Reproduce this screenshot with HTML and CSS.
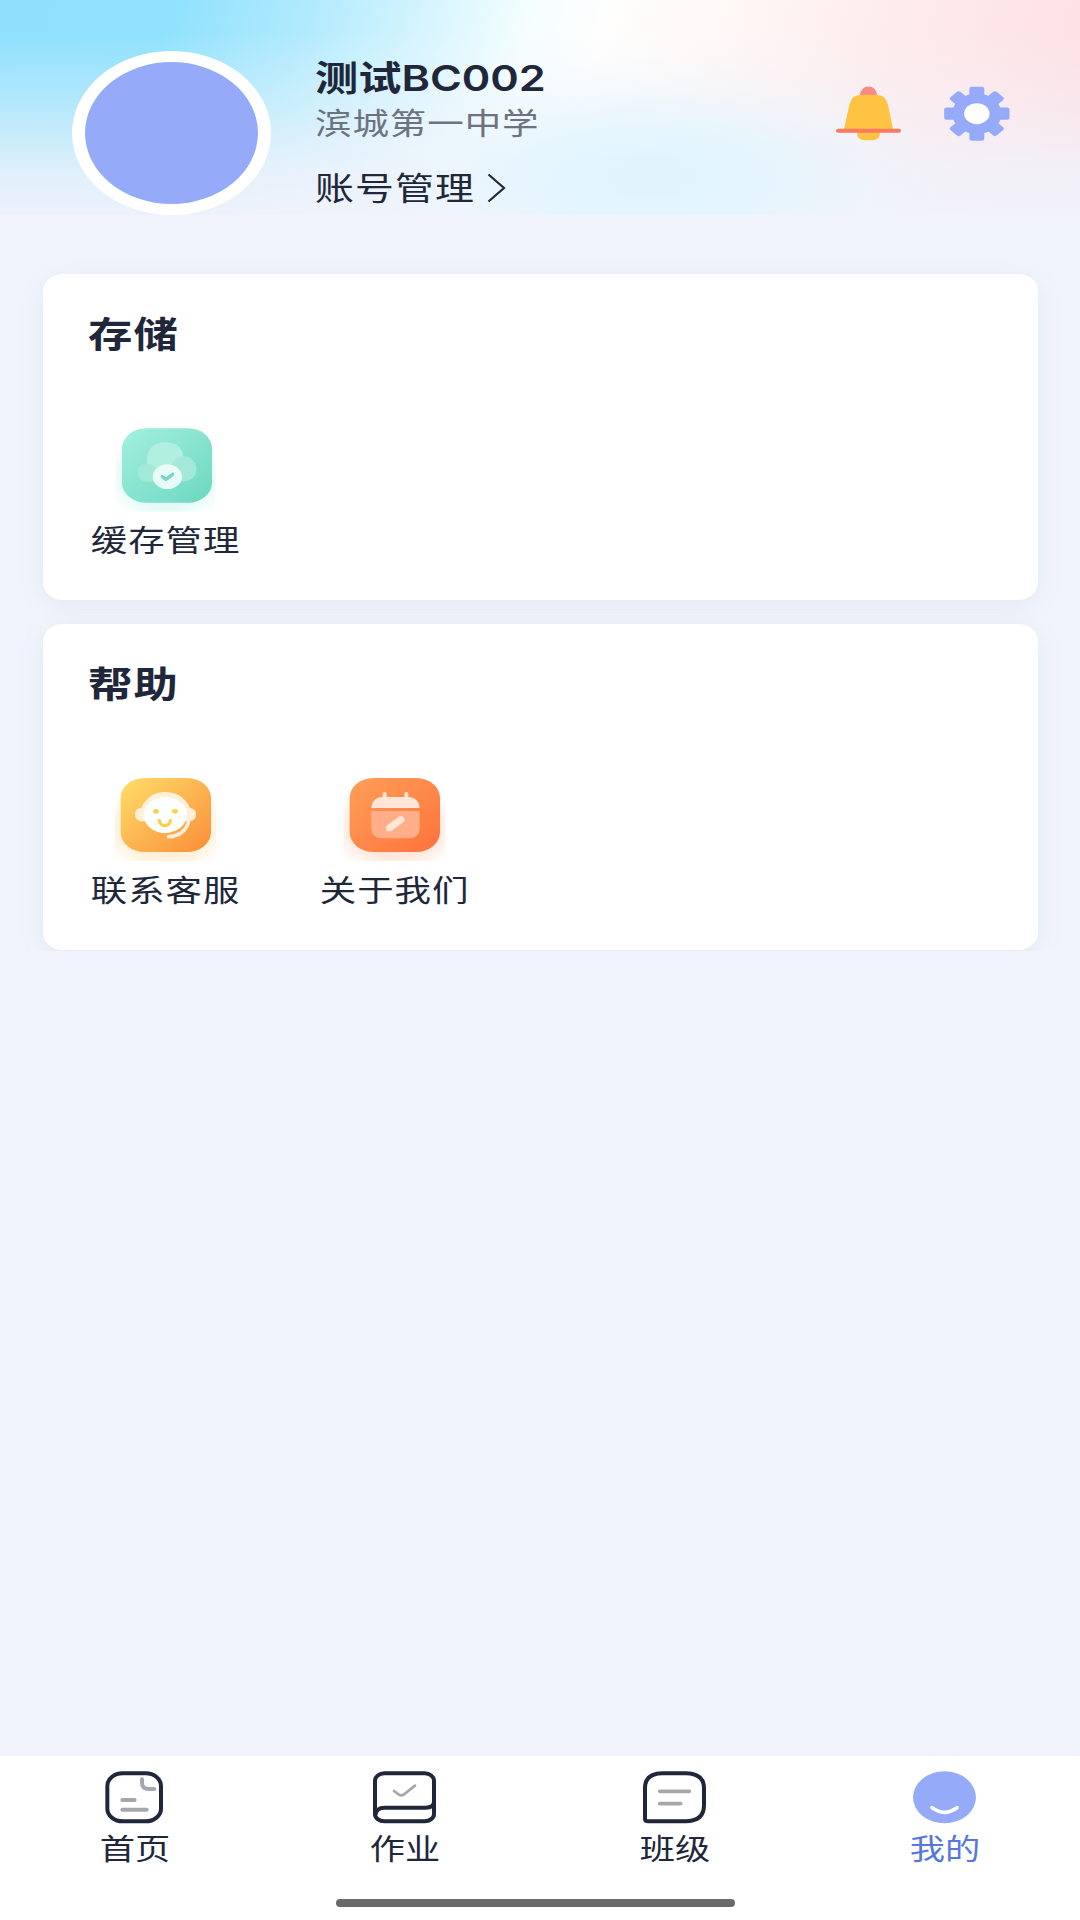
FILE: index.html
```html
<!DOCTYPE html>
<html lang="zh-CN">
<head>
<meta charset="utf-8">
<title>我的</title>
<link rel="stylesheet" href="styles.css">
</head>
<body>
<div class="screen">
  <header class="profile">
    <div class="avatar"></div>
    <div class="info">
      <div class="name"><span class="wide">测试<span class="latin">BC002</span></span></div>
      <div class="school"><span class="wide">滨城第一中学</span></div>
      <div class="account">
        <span class="account-text"><span class="wide">账号管理</span></span>
        <svg class="chevron" viewBox="0 0 19 30"><path d="M1.5 1.5L17 15L1.5 28.5"/></svg>
      </div>
    </div>
    <div class="actions">
      <svg width="66" height="56" viewBox="108 77 198 168">
        <path d="M180 106V104a25 25 0 0 1 51 0v2z" fill="#fb8986"/>
        <path d="M171 212h69v6q0 22-24 22h-21q-24 0-24-22z" fill="#ffc343"/>
        <path d="M131 211L148 133Q155 103 184 103H228Q257 103 264 133L280 211z" fill="#ffc343"/>
        <rect x="108" y="205" width="195" height="12" rx="6" fill="#f97b5f"/>
      </svg>
      <svg width="66" height="56" viewBox="431 77 198 168">
        <g transform="translate(529.5 160) scale(1.21 1)" fill="#95abf9">
          <circle r="61"/>
          <g><rect x="-18.5" y="-81" width="37" height="162" rx="6"/><rect x="-81" y="-18.5" width="162" height="37" rx="6"/></g>
          <g transform="rotate(45)"><rect x="-17.5" y="-81" width="35" height="162" rx="6"/><rect x="-81" y="-17.5" width="162" height="35" rx="6"/></g>
          <circle r="31.5" fill="#fff"/>
        </g>
      </svg>
    </div>
  </header>

  <main class="content">
    <section class="card">
      <h2 class="card-title"><span class="wide">存储</span></h2>
      <div class="entries">
        <a class="entry">
          <svg class="entry-icon" viewBox="240 495 336 264">
            <defs>
              <linearGradient id="mint" x1="0" y1="0" x2="1" y2="1"><stop offset="0" stop-color="#a3f0de"/><stop offset="1" stop-color="#6bd7c0"/></linearGradient>
              <radialGradient id="mintGlow"><stop offset=".6" stop-color="#e2fbf5"/><stop offset="1" stop-color="#e2fbf5" stop-opacity="0"/></radialGradient>
              <clipPath id="boxA"><rect x="257" y="560" width="300" height="195"/></clipPath>
            </defs>
            <ellipse cx="409" cy="655" rx="200" ry="135" fill="url(#mintGlow)" clip-path="url(#boxA)"/>
            <rect x="276" y="505" width="270" height="223" rx="72" ry="60" fill="url(#mint)"/>
            <path d="M352 611C330 611 323 624 323 638C323 653 334 665 354 665H452C484 665 499 650 499 628C499 604 482 588 459 588C457 562 436 547 406 547C371 547 347 570 352 611z" fill="#a2e9d9"/>
            <path d="M352 611C347 570 371 547 406 547C436 547 457 562 459 588C438 592 424 604 420 630L390 650C384 624 372 612 352 611z" fill="#b1efe1"/>
            <ellipse cx="412" cy="650" rx="44" ry="37" fill="#e9fbf6"/>
            <path d="M397 650L408 658L428 643" fill="none" stroke="#71d8c3" stroke-width="10" stroke-linecap="round" stroke-linejoin="round"/>
          </svg>
          <span class="entry-label"><span class="wide mid">缓存管理</span></span>
        </a>
      </div>
    </section>

    <section class="card">
      <h2 class="card-title"><span class="wide">帮助</span></h2>
      <div class="entries">
        <a class="entry">
          <svg class="entry-icon" viewBox="240 495 336 264">
            <defs>
              <linearGradient id="gold" x1="0" y1="0" x2="1" y2="1"><stop offset="0" stop-color="#ffde69"/><stop offset="1" stop-color="#fa8d38"/></linearGradient>
              <radialGradient id="goldGlow"><stop offset=".6" stop-color="#ffefd6"/><stop offset="1" stop-color="#ffefd6" stop-opacity="0"/></radialGradient>
              <clipPath id="boxB"><rect x="254" y="560" width="304" height="193"/></clipPath>
            </defs>
            <ellipse cx="407" cy="655" rx="205" ry="138" fill="url(#goldGlow)" clip-path="url(#boxB)"/>
            <rect x="272" y="504" width="271" height="222" rx="72" ry="60" fill="url(#gold)"/>
            <path d="M334 594C346 563 373 546 406 546C439 546 467 563 480 594C492 595 498 603 498 613C498 625 492 633 478 634H334C321 633 315 624 315 613C315 602 321 594 334 594z" fill="#fff0d8"/>
            <ellipse cx="406" cy="615" rx="65" ry="54" fill="#fff"/>
            <path d="M476 631C472 660 448 679 416 680" fill="none" stroke="#ffeedb" stroke-width="11" stroke-linecap="round"/>
            <path d="M468 634C459 653 442 664 422 668" fill="none" stroke="#fdac49" stroke-width="3"/>
            <ellipse cx="378" cy="604" rx="9" ry="7" fill="#ffcf55"/><ellipse cx="435" cy="604" rx="9" ry="7" fill="#ffcf55"/>
            <path d="M388 631C389 652 420 652 421 631" fill="none" stroke="#ffcf48" stroke-width="10" stroke-linecap="round"/>
          </svg>
          <span class="entry-label"><span class="wide mid">联系客服</span></span>
        </a>
        <a class="entry">
          <svg class="entry-icon" viewBox="928 495 336 264">
            <defs>
              <linearGradient id="coral" x1="0" y1="0" x2="1" y2="1"><stop offset="0" stop-color="#ff9f58"/><stop offset="1" stop-color="#ff723c"/></linearGradient>
              <radialGradient id="coralGlow"><stop offset=".6" stop-color="#ffe7db"/><stop offset="1" stop-color="#ffe7db" stop-opacity="0"/></radialGradient>
              <clipPath id="boxC"><rect x="942" y="560" width="304" height="193"/></clipPath>
            </defs>
            <ellipse cx="1095" cy="655" rx="205" ry="138" fill="url(#coralGlow)" clip-path="url(#boxC)"/>
            <rect x="960" y="504" width="271" height="222" rx="72" ry="60" fill="url(#coral)"/>
            <path d="M1025 594C1027 572 1040 561 1059 561V552Q1059 546 1065 546T1071 552V561H1124V552Q1124 546 1130 546T1136 552V561C1156 561 1169 573 1170 594z" fill="#ffe5d8"/>
            <path d="M1025 603H1170V654Q1170 685 1133 685H1062Q1025 685 1025 654z" fill="#ffae87"/>
            <path d="M1081 653L1114 629" stroke="#ffe5d8" stroke-width="21" stroke-linecap="round"/>
            <path d="M1070 664V651L1088 663z" fill="#ffe5d8"/>
          </svg>
          <span class="entry-label"><span class="wide mid">关于我们</span></span>
        </a>
      </div>
    </section>
  </main>

  <nav class="tabs">
    <div class="tab-row">
      <a class="tab">
        <svg class="tab-icon" viewBox="66 60 198 164">
          <rect x="82" y="70" width="161" height="144" rx="46" ry="38" class="line"/>
          <path class="faint" stroke-width="12" d="M186 88V98Q186 117 207 117H223M127 150H164M127 179H200"/>
        </svg>
        <span class="tab-label"><span class="wide mid">首页</span></span>
      </a>
      <a class="tab">
        <svg class="tab-icon" viewBox="876 60 198 164">
          <rect x="885" y="70" width="177" height="144" rx="28" ry="22" class="line"/>
          <path class="line" d="M886 194Q889 173 914 173H1037Q1060 173 1062 157"/>
          <path class="faint" stroke-width="8" d="M942 123L957 134Q964 138 971 134L1005 107"/>
        </svg>
        <span class="tab-label"><span class="wide mid">作业</span></span>
      </a>
      <a class="tab">
        <svg class="tab-icon" viewBox="126 60 198 164">
          <path class="line" d="M135 114Q135 70 188 70H256Q312 70 312 114V166Q312 214 256 214H145Q135 214 135 206z"/>
          <path class="faint" stroke-width="11" d="M179 124H268M179 161H242"/>
        </svg>
        <span class="tab-label"><span class="wide mid">班级</span></span>
      </a>
      <a class="tab active">
        <svg class="tab-icon" viewBox="936 60 198 164">
          <ellipse cx="1033.500" cy="142" rx="94.500" ry="78" fill="#95abf9"/>
          <path d="M996 173Q1033 201 1071 173" fill="none" stroke="#fff" stroke-width="11" stroke-linecap="round"/>
        </svg>
        <span class="tab-label"><span class="wide mid">我的</span></span>
      </a>
    </div>
    <div class="home-bar"></div>
  </nav>
</div>
</body>
</html>
```
FILE: styles.css
```css
* { box-sizing: border-box; }

body {
  margin: 0;
  background: #f1f4fd;
  color: #20273a;
  font-family: "Noto Sans CJK SC", sans-serif;
}

.screen {
  display: flex;
  flex-direction: column;
  width: 1080px;
  height: 1920px;
  overflow: hidden;
}

/* Extended lettering: glyphs are wider than they are tall. */
.wide {
  display: inline-block;
  white-space: nowrap;
  transform: scaleX(1.215);
  transform-origin: 0 50%;
}

.wide.mid { transform-origin: 50% 50%; }

.profile {
  display: flex;
  flex: none;
  height: 215px;
  padding-left: 72px;
  background:
    radial-gradient(ellipse 300px 120px at 650px 175px, rgba(222, 244, 254, .95) 0%, rgba(224, 246, 255, .7) 40%, rgba(232, 248, 255, .25) 75%, rgba(240, 250, 255, 0) 100%),
    linear-gradient(to bottom, rgba(241, 243, 251, 0) 15%, rgba(241, 243, 251, .4) 50%, rgba(241, 243, 251, .82) 80%, rgba(241, 243, 251, .95) 100%),
    linear-gradient(105deg, #8fe0fd 0%, #8fe1fd 15%, #b0eafd 27%, #d6f5fe 38%, #f5feff 47%, #fefefd 54%, #fef7f6 65%, #feebeb 80%, #fddfe3 100%);
}

.avatar {
  flex: none;
  width: 199px;
  height: 164px;
  margin-top: 51px;
  border: solid #fff;
  border-width: 11px 13px;
  border-radius: 50%;
  background: #95abf9;
}

.info {
  flex: 1;
  padding: 50px 0 0 44px;
}

.name {
  height: 52px;
  font-size: 35.6px;
  line-height: 52px;
  font-weight: 600;
}

.latin {
  font-family: Inter, sans-serif;
  font-weight: 600;
}

.school {
  height: 38px;
  font-size: 30px;
  line-height: 38px;
  letter-spacing: .8px;
  color: #6d7280;
}

.account {
  display: flex;
  height: 48px;
  margin-top: 22px;
  font-size: 32px;
  line-height: 48px;
  letter-spacing: .9px;
}

.account-text { width: 172px; }

.chevron {
  width: 19px;
  height: 30px;
  margin-top: 11px;
  fill: none;
  stroke: #20273a;
  stroke-width: 2.2;
}

.actions {
  display: flex;
  gap: 42px;
  padding: 86px 70px 0 0;
}

.content {
  display: flex;
  flex: none;
  flex-direction: column;
  gap: 24px;
  height: 736px;
  padding: 59px 42px 0 43px;
  overflow: hidden;
}

.card {
  flex: none;
  height: 326px;
  padding: 33px 0 0 8px;
  border-radius: 20px / 17px;
  background: #fff;
  box-shadow: 0 5px 24px rgba(110, 140, 110, .1);
}

.card-title {
  height: 52px;
  margin: 0 0 0 37px;
  font-size: 36.5px;
  line-height: 52px;
  font-weight: 600;
  letter-spacing: 1px;
}

.entries {
  display: flex;
  margin-top: 66px;
}

.entry {
  display: flex;
  flex-direction: column;
  align-items: center;
  width: 229.5px;
}

.entry-icon {
  width: 112px;
  height: 88px;
}

.entry-label {
  margin: 3px 1px 0 0;
  font-size: 30px;
  line-height: 44px;
  letter-spacing: .8px;
}

.tabs {
  display: flex;
  flex-direction: column;
  align-items: center;
  justify-content: space-between;
  height: 164px;
  margin-top: auto;
  padding: 14px 0 13px;
  background: #fff;
}

.tab-row {
  display: flex;
  width: 100%;
}

.tab {
  display: flex;
  flex: 1;
  flex-direction: column;
  align-items: center;
}

.tab-icon {
  width: 66px;
  height: 54.667px;
}

.tab-label {
  font-size: 29px;
  line-height: 44px;
}

.active { color: #5677dd; }

.line {
  fill: none;
  stroke: #20273a;
  stroke-width: 12;
}

.faint {
  fill: none;
  stroke: #a6a7ad;
  stroke-linecap: round;
  stroke-linejoin: round;
}

.home-bar {
  width: 399px;
  height: 8px;
  margin-right: 9px;
  border-radius: 4px;
  background: #696969;
}
```
